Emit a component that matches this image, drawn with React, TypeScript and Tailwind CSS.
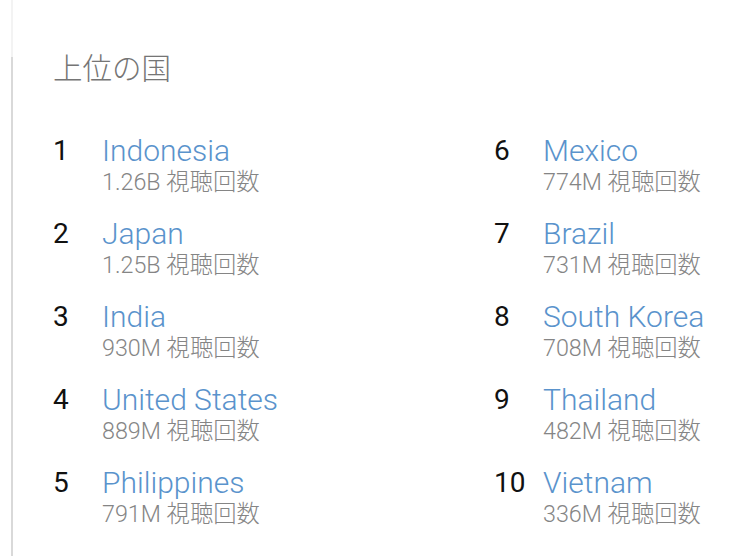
import React from 'react';

const countries = [
  { rank: 1, name: 'Indonesia', views: '1.26B' },
  { rank: 2, name: 'Japan', views: '1.25B' },
  { rank: 3, name: 'India', views: '930M' },
  { rank: 4, name: 'United States', views: '889M' },
  { rank: 5, name: 'Philippines', views: '791M' },
  { rank: 6, name: 'Mexico', views: '774M' },
  { rank: 7, name: 'Brazil', views: '731M' },
  { rank: 8, name: 'South Korea', views: '708M' },
  { rank: 9, name: 'Thailand', views: '482M' },
  { rank: 10, name: 'Vietnam', views: '336M' },
];

function CountryRow({ rank, name, views }: { rank: number; name: string; views: string }) {
  return (
    <li className="flex">
      <div className="w-[49px] text-[28px] leading-[34px] text-[#111]">{rank}</div>
      <div>
        <div className="text-[30px] font-light leading-[34px] text-[#5a93cc]">{name}</div>
        <div className="text-[23.3px] font-light leading-[28px] text-[#858585]">{views} 視聴回数</div>
      </div>
    </li>
  );
}

export default function App() {
  const left = countries.slice(0, 5);
  const right = countries.slice(5);

  return (
    <div
      className="flex min-h-[556px] bg-white"
      style={{ fontFamily: 'Roboto, "Noto Sans CJK JP", sans-serif' }}
    >
      {/* side rule */}
      <div className="ml-[11px] flex w-[2px] flex-col">
        <div className="h-[57px] bg-[#f3f3f3]" />
        <div className="flex-1 bg-[#d9d9d9]" />
      </div>

      <div className="flex-1 pl-[40px] pt-[51px]">
        <h2 className="text-[29.5px] font-light leading-[36px] text-[#757575]">上位の国</h2>

        <div className="mt-[47px] grid grid-cols-[441px_1fr]">
          <ul className="flex flex-col gap-[21px]">
            {left.map(c => (
              <CountryRow key={c.rank} {...c} />
            ))}
          </ul>
          <ul className="flex flex-col gap-[21px]">
            {right.map(c => (
              <CountryRow key={c.rank} {...c} />
            ))}
          </ul>
        </div>
      </div>
    </div>
  );
}
